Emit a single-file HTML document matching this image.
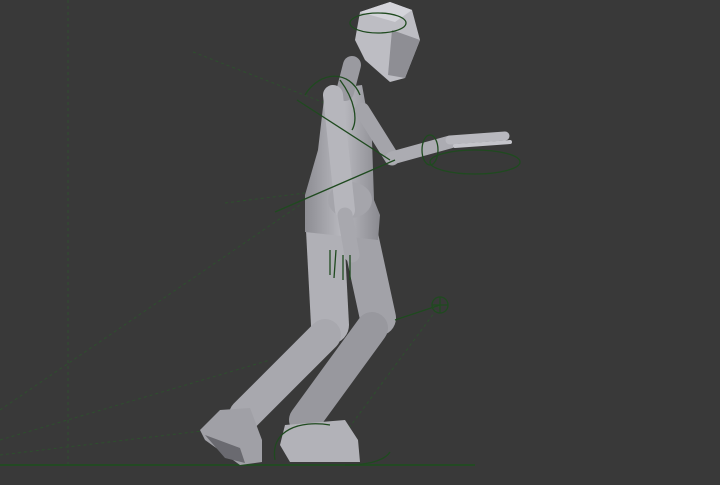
<!DOCTYPE html><html><head><style>html,body{margin:0;padding:0;background:#393939;overflow:hidden}</style></head><body>
<svg width="720" height="480" viewBox="0 0 720 480" xmlns="http://www.w3.org/2000/svg">
<defs>
<linearGradient id="g" x1="0" x2="1"><stop offset="0" stop-color="#8d8d93"/><stop offset="0.5" stop-color="#b9b9bf"/><stop offset="1" stop-color="#8a8a90"/></linearGradient>
</defs>
<rect width="720" height="480" fill="#393939"/>
<g stroke="#2e4f2e" stroke-width="1" stroke-dasharray="3,3" fill="none">
<line x1="68" y1="0" x2="68" y2="465"/>
<line x1="193" y1="52" x2="330" y2="105"/>
<line x1="225" y1="203" x2="305" y2="193"/>
<line x1="0" y1="410" x2="300" y2="205"/>
<line x1="0" y1="440" x2="270" y2="360"/>
<line x1="0" y1="455" x2="210" y2="430"/>
<line x1="440" y1="305" x2="340" y2="440"/>
</g>
<line x1="0" y1="465" x2="475" y2="465" stroke="#234a23" stroke-width="2"/>
<g stroke-linecap="round" fill="none" stroke="#a2a2a8">
<line x1="360" y1="235" x2="378" y2="318" stroke-width="36"/>
<line x1="372" y1="328" x2="305" y2="420" stroke-width="32" stroke="#98989e"/>
<line x1="325" y1="230" x2="330" y2="325" stroke-width="38" stroke="#b0b0b6"/>
<line x1="325" y1="335" x2="245" y2="415" stroke-width="32" stroke="#a8a8ae"/>
</g>
<polygon points="285,425 345,420 358,440 360,462 290,462 280,445" fill="#b2b2b8"/>
<polygon points="220,410 250,408 262,440 262,462 240,465 205,440 200,430" fill="#a0a0a6"/>
<polygon points="205,435 240,448 245,463 225,458" fill="#6a6a70"/>
<polygon points="325,90 362,85 372,140 374,200 380,215 378,240 305,232 305,195 318,150" fill="url(#g)"/>
<ellipse cx="350" cy="200" rx="22" ry="18" fill="#a5a5ab"/>
<g stroke-linecap="round" fill="none">
<line x1="352" y1="65" x2="345" y2="92" stroke="#9a9aa0" stroke-width="18"/>
<line x1="333" y1="95" x2="345" y2="210" stroke="#b6b6bc" stroke-width="20"/>
<line x1="345" y1="215" x2="352" y2="255" stroke="#a8a8ae" stroke-width="15"/>
<line x1="362" y1="110" x2="392" y2="158" stroke="#a4a4aa" stroke-width="15"/>
<line x1="392" y1="158" x2="450" y2="142" stroke="#acacb2" stroke-width="13"/>
<line x1="450" y1="140" x2="505" y2="136" stroke="#b8b8be" stroke-width="9"/>
<line x1="455" y1="146" x2="510" y2="142" stroke="#c4c4ca" stroke-width="4"/>
</g>
<polygon points="360,12 390,2 412,10 420,40 405,78 390,82 365,60 355,40" fill="#bdbdc3"/>
<polygon points="392,30 420,40 405,78 388,75" fill="#8e8e94"/>
<polygon points="360,12 390,2 412,10 395,22" fill="#d4d4da"/>
<g stroke="#1f4a1f" stroke-width="1.3" fill="none">
<ellipse cx="378" cy="23" rx="28" ry="10"/>
<line x1="297" y1="100" x2="390" y2="160"/>
<line x1="275" y1="212" x2="395" y2="160"/>
<ellipse cx="475" cy="162" rx="45" ry="12"/>
<ellipse cx="430" cy="150" rx="8" ry="15"/>
<path d="M305,95 C320,70 350,70 360,95 M340,80 C355,100 358,120 352,130"/>
<line x1="395" y1="320" x2="440" y2="305"/>
<circle cx="440" cy="305" r="8"/>
<line x1="432" y1="305" x2="448" y2="305"/><line x1="440" y1="297" x2="440" y2="313"/>
<path d="M275,460 C270,430 300,420 330,425 M345,465 C370,465 385,460 390,452"/>
<path d="M330,250 l0,25 M336,250 l-2,28 M343,255 l0,25 M350,255 l0,25"/>
</g>
</svg>
</body></html>
